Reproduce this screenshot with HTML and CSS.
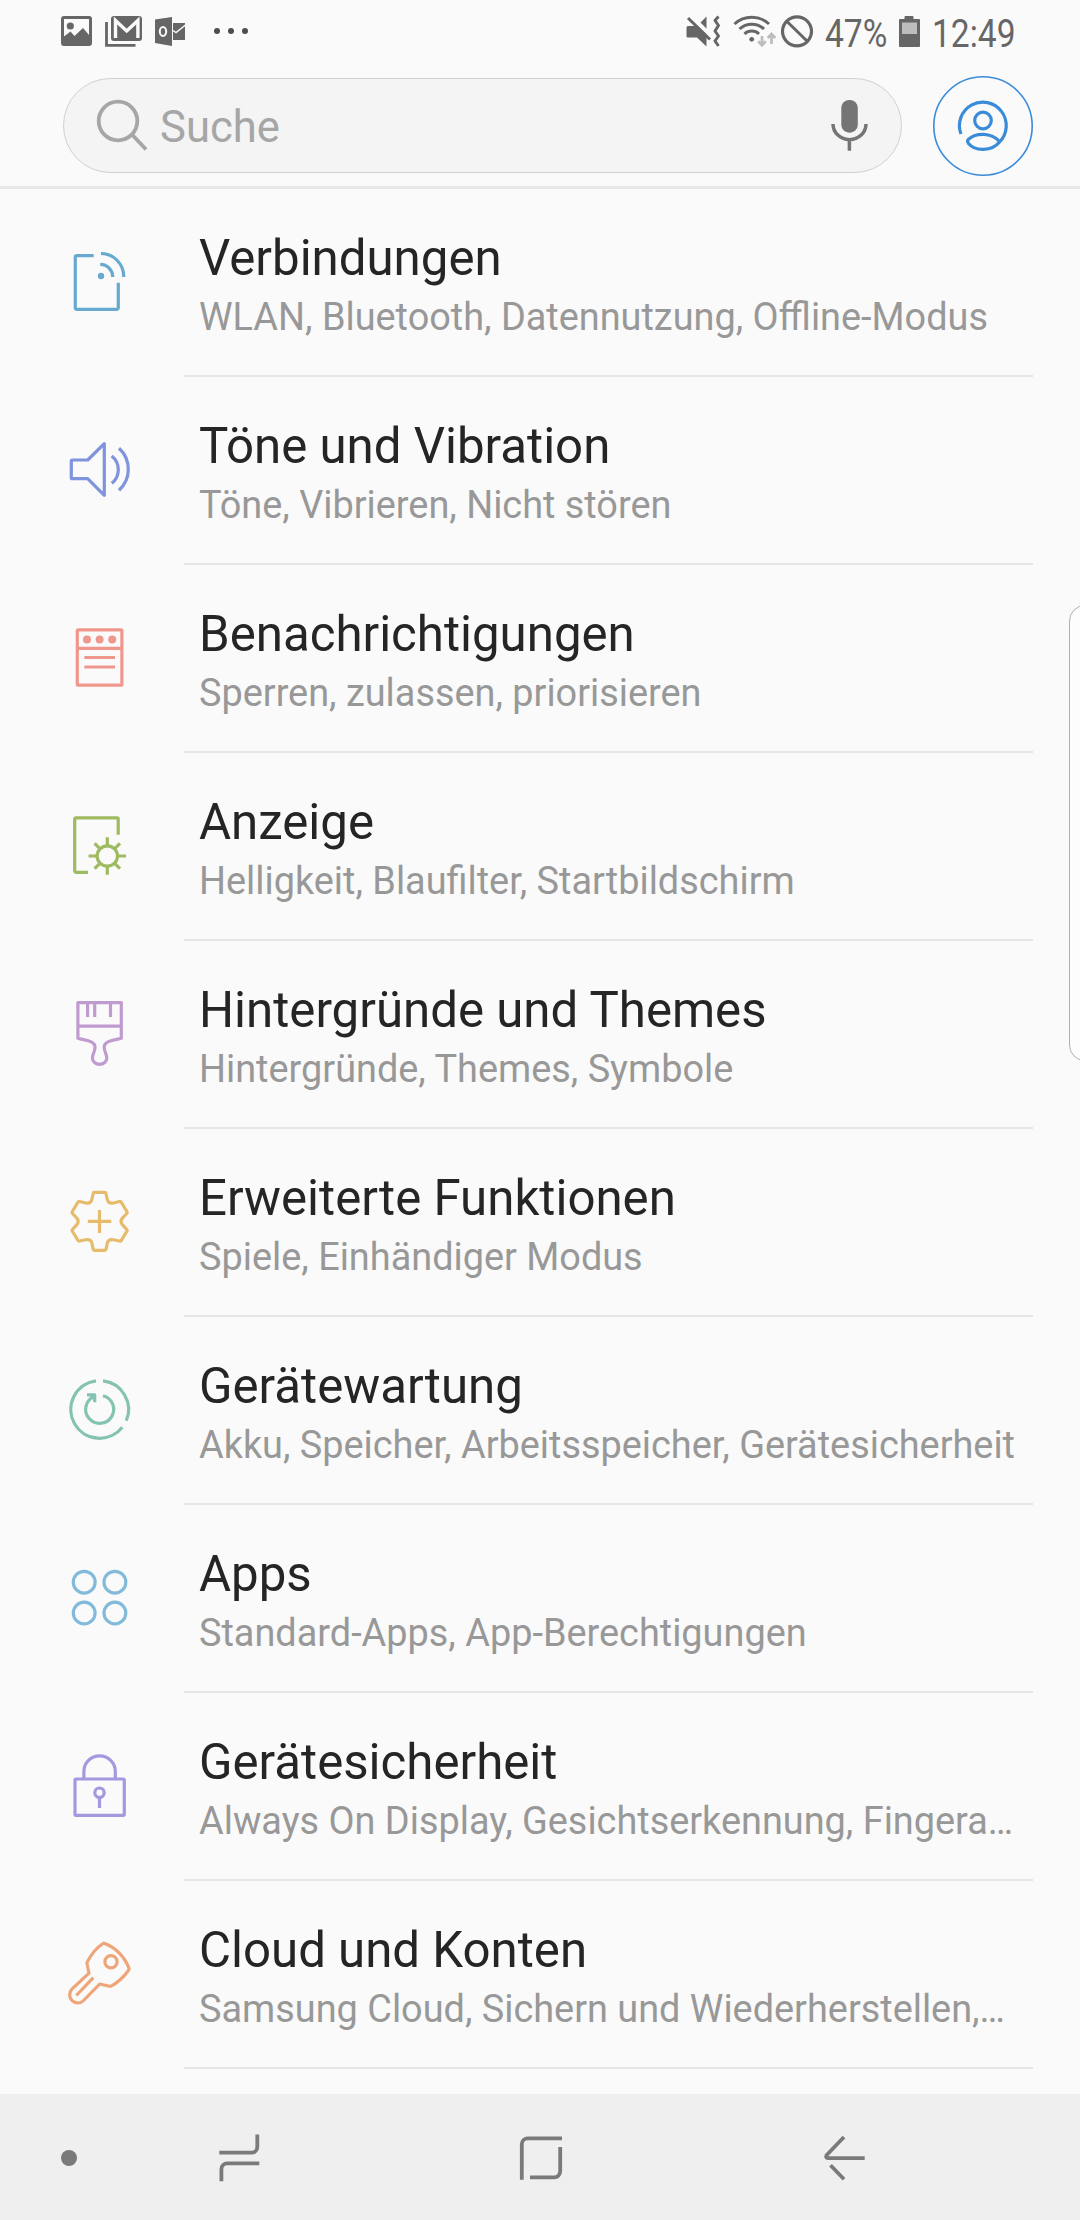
FILE: index.html
```html
<!DOCTYPE html>
<html lang="de">
<head>
<meta charset="utf-8">
<title>Einstellungen</title>
<link rel="stylesheet" href="styles.css">
</head>
<body>
<div class="screen">
  <div class="status">
    <svg class="status-left" viewBox="60 12 190 40" width="190" height="40">
      <path fill="#666" fill-rule="evenodd" d="M64 16H89a3 3 0 0 1 3 3V43a3 3 0 0 1-3 3H64a3 3 0 0 1-3-3V19a3 3 0 0 1 3-3ZM64 19V36.500l6.500-5 4 4.500 8.500-8 6 7V19Z"/>
      <circle cx="70.300" cy="26" r="3.600" fill="#666"/>
      <path d="M106.500 22V45.300H135.500" fill="none" stroke="#666" stroke-width="2.800"/>
      <rect x="111" y="16" width="31" height="25" rx="3" fill="#666"/>
      <path d="M115.500 38V20.500l11.200 10.500 11.200-10.500V38" fill="none" stroke="#fafafa" stroke-width="3.400"/>
      <path d="M155 19.500 172 17V46L155 43Z" fill="#666"/>
      <ellipse cx="163" cy="31.500" rx="3.200" ry="4.400" fill="none" stroke="#fafafa" stroke-width="2"/>
      <path d="M173 23H185V40H173Z" fill="#666"/>
      <path d="m173 30.500 3 2L185.500 25" fill="none" stroke="#fafafa" stroke-width="1.500"/>
      <circle cx="217" cy="31" r="3" fill="#4d4d4d"/><circle cx="231" cy="31" r="3" fill="#4d4d4d"/><circle cx="245" cy="31" r="3" fill="#4d4d4d"/>
    </svg>
    <div class="status-right">
      <svg viewBox="684 12 132 40" width="132" height="40">
        <path fill="#666" d="M688 26h9l9.500-9.500V46.500L697 37.500h-9a1.500 1.500 0 0 1-1.500-1.500V27.500a1.500 1.500 0 0 1 1.500-1.500Z"/>
        <path d="m689 14 22.500 22.500" stroke="#fafafa" stroke-width="4"/>
        <path d="m688 18 22 21.500" stroke="#666" stroke-width="3"/>
        <path d="m718.500 16.500-3.500 4 3.500 5-3.500 5.500 3.500 5-3.500 5 3.500 5" fill="none" stroke="#666" stroke-width="3" stroke-linejoin="round"/>
        <path d="M734.500 24a25.500 25.500 0 0 1 34.500 0M739.500 29a18 18 0 0 1 24.500 0M744.500 34a10.500 10.500 0 0 1 14.500 0" fill="none" stroke="#666" stroke-width="3"/>
        <circle cx="751.700" cy="39.300" r="2.400" fill="#666"/>
        <path d="M762 36V45M758.200 41.300l3.800 4 3.800-4M771.500 44V34.500M767.700 38l3.800-4 3.800 4" fill="none" stroke="#bdbdbd" stroke-width="2.700"/>
        <circle cx="797" cy="31.300" r="14.500" fill="none" stroke="#666" stroke-width="3.200"/>
        <path d="m786.500 21 21 20.500" stroke="#666" stroke-width="3"/>
      </svg>
      <span class="percent"><span class="condensed">47%</span></span>
      <svg class="battery" viewBox="899 12 22 40" width="22" height="40">
        <path fill="#666" d="M905.500 16h7a1 1 0 0 1 1 1v2H919a1 1 0 0 1 1 1V46a1 1 0 0 1-1 1H900a1 1 0 0 1-1-1V20a1 1 0 0 1 1-1h4.500V17a1 1 0 0 1 1-1Z"/>
        <path fill="#bdbdbd" d="M902 22.500H917V34H902Z"/>
      </svg>
      <span class="clock"><span class="condensed">12:49</span></span>
    </div>
  </div>

  <header class="header">
    <div class="search">
      <svg viewBox="92 98 60 60" width="60" height="60" fill="none" stroke="#a6a6a6" stroke-width="3.800"><circle cx="118" cy="123" r="19.300"/><path d="m132 136.500 14 15"/></svg>
      <span class="placeholder">Suche</span>
      <svg viewBox="830 98 40 56" width="40" height="56" fill="none" stroke="#757575" stroke-width="3.500"><rect x="841.300" y="100" width="16.500" height="32.700" rx="8" fill="#757575" stroke="none"/><path d="M833 124a16.400 15.600 0 0 0 33 0M849.400 139V150.700"/></svg>
    </div>
    <div class="profile">
      <svg viewBox="933 76 100 100" width="100" height="100" fill="none" stroke="#3a8bd8" stroke-width="3.200"><circle cx="983" cy="126" r="49.200" stroke-width="1.600"/><path d="M961 134A23.400 23.400 0 1 1 999.500 142C992 151.500 975 151.500 968.500 143.500Q966.700 141 968.500 139.200C976.500 132.500 991 132.500 999.500 141.500"/><circle cx="983" cy="120.500" r="8.300"/></svg>
    </div>
  </header>

  <main class="list">
    <div class="row">
      <svg class="icon blue" viewBox="0 0 64 64"><path d="M26.700 5.700H9.800a1.500 1.500 0 0 0-1.500 1.500V57.800a1.500 1.500 0 0 0 1.500 1.500H49.800a1.500 1.500 0 0 0 1.500-1.500V32.700M33.300 14.300A12.500 12.500 0 0 1 45.700 27M34 3.500A22.900 22.900 0 0 1 56.700 27"/><circle class="solid" cx="34" cy="26" r="3.200"/></svg>
      <div class="text"><div class="title">Verbindungen</div><div class="sub">WLAN, Bluetooth, Datennutzung, Offline-Modus</div></div>
    </div>
    <div class="row">
      <svg class="icon indigo" viewBox="0 0 64 64"><path d="M5.300 22H20.700L37.300 5.700V57.300L20.700 40.700H5.300a1 1 0 0 1-1-1V23a1 1 0 0 1 1-1ZM44.700 18a17.400 17.400 0 0 1 0 27.300M52 10.300a28.400 28.400 0 0 1 0 42"/></svg>
      <div class="text"><div class="title">Töne und Vibration</div><div class="sub">Töne, Vibrieren, Nicht stören</div></div>
    </div>
    <div class="row">
      <svg class="icon coral" viewBox="0 0 64 64"><rect x="10.300" y="3.900" width="44.600" height="55.300" rx="1"/><path d="M10.300 22.300H55M17.300 31.500H48M17.300 41H48"/><g class="solid"><circle cx="20" cy="13.400" r="4"/><circle cx="32.600" cy="13.400" r="4"/><circle cx="45.200" cy="13.400" r="4"/></g></svg>
      <div class="text"><div class="title">Benachrichtigungen</div><div class="sub">Sperren, zulassen, priorisieren</div></div>
    </div>
    <div class="row">
      <svg class="icon green" viewBox="0 0 64 64"><path d="M21 58.300H8.900a1.200 1.200 0 0 1-1.200-1.200V5a1.200 1.200 0 0 1 1.200-1.200H50a1.200 1.200 0 0 1 1.200 1.200V20.700"/><circle cx="40.300" cy="42" r="10.200"/><path d="M40.300 31.500V23.300M40.300 52.500V60.700M29.800 42H21.600M50.800 42H59M32.900 34.600 27.600 29.300M47.700 34.600 53 29.300M32.900 49.400 27.600 54.700M47.700 49.400 53 54.700"/></svg>
      <div class="text"><div class="title">Anzeige</div><div class="sub">Helligkeit, Blaufilter, Startbildschirm</div></div>
    </div>
    <div class="row">
      <svg class="icon violet" viewBox="0 0 64 64"><path d="M10.900.7H54.300V36.300C47 38.500 37.800 38.500 37.200 44.500C36.800 49 39.800 52 39.800 56A7.200 6.300 0 0 1 25.400 56C25.400 52 28.400 49 28 44.500C27.400 38.500 18.200 38.500 10.900 36.300ZM10.900 24.200H54.300M20.600.7V14.900M27.700.7V14.900M43.500.7V14.900"/></svg>
      <div class="text"><div class="title">Hintergründe und Themes</div><div class="sub">Hintergründe, Themes, Symbole</div></div>
    </div>
    <div class="row">
      <svg class="icon amber" viewBox="0 0 64 64"><path d="M27.500 2.400H37.700Q38.800 2.400 39 3.500L40.300 9.500Q41.300 14 46.500 13L52.500 11.500Q53.700 11.200 54.300 12.200L60 21.700Q60.600 22.700 59.700 23.500L56 27.300Q52 31.300 56 35.300L59.700 39.300Q60.600 40.200 60 41L54.300 50.300Q53.700 51.300 52.500 51L46.500 49.800Q41.300 48.800 40.300 53.200L39 59.300Q38.800 60.400 37.700 60.400H27.500Q26.400 60.400 26.200 59.300L24.900 53.200Q23.900 48.800 18.700 49.800L12.700 51Q11.500 51.300 10.900 50.300L5.200 41Q4.600 40.200 5.500 39.300L9.200 35.300Q13.200 31.300 9.200 27.300L5.500 23.500Q4.600 22.700 5.200 21.700L10.900 12.200Q11.500 11.200 12.700 11.500L18.700 13Q23.900 14 24.900 9.500L26.200 3.500Q26.400 2.400 27.500 2.400ZM20.800 31.400H44.300M32.500 20V43"/></svg>
      <div class="text"><div class="title">Erweiterte Funktionen</div><div class="sub">Spiele, Einhändiger Modus</div></div>
    </div>
    <div class="row">
      <svg class="icon teal" viewBox="0 0 64 64"><path d="M36 2.900A28.800 28.800 0 0 1 59.300 42.700M55.300 49.200A28.800 28.800 0 1 1 29 2.900M36 17.700A14 14 0 1 1 27 18.500M20 16.900H27.700V24.200"/></svg>
      <div class="text"><div class="title">Gerätewartung</div><div class="sub">Akku, Speicher, Arbeitsspeicher, Gerätesicherheit</div></div>
    </div>
    <div class="row">
      <svg class="icon sky" viewBox="0 0 64 64"><circle cx="17.200" cy="16.200" r="10.900"/><circle cx="47.900" cy="16.200" r="10.900"/><circle cx="17.200" cy="47" r="10.900"/><circle cx="47.900" cy="47" r="10.900"/></svg>
      <div class="text"><div class="title">Apps</div><div class="sub">Standard-Apps, App-Berechtigungen</div></div>
    </div>
    <div class="row">
      <svg class="icon purple" viewBox="0 0 64 64"><rect x="8" y="25" width="49.300" height="36.300" rx="1"/><path d="M16.900 25V17.500A15.700 15.700 0 0 1 48.300 17.500V25M32.500 44V54"/><circle cx="32.500" cy="38.700" r="4.700"/></svg>
      <div class="text"><div class="title">Gerätesicherheit</div><div class="sub">Always On Display, Gesichtserkennung, Fingera…</div></div>
    </div>
    <div class="row">
      <svg class="icon orange" viewBox="0 0 64 64"><path d="M36 1.500Q36.700 1 37.700 1.400C49 5.500 58 15.500 62 26.300Q62.400 27.400 61.600 28.200C57 34.500 51 40.500 44 44.100Q43.400 44.400 42.700 44.200L32.700 42 16.600 58.500A8.100 8.100 0 0 1 4.900 47.200L22 31.200 20 21.500Q19.800 20.700 20.300 19.900C24 12.500 30 5.500 36 1.500ZM9.300 53.500 26.300 35.700"/><circle cx="44" cy="19.700" r="6.100"/></svg>
      <div class="text"><div class="title">Cloud und Konten</div><div class="sub">Samsung Cloud, Sichern und Wiederherstellen,…</div></div>
    </div>
  </main>

  <nav class="nav">
    <svg viewBox="0 2094 1080 126" width="1080" height="126" fill="none" stroke="#7a7a7a" stroke-width="3.800">
      <circle cx="69" cy="2158" r="8" fill="#7a7a7a" stroke="none"/>
      <path d="M257.300 2134.500V2147a5.700 5.700 0 0 1-5.700 5.700H219.300M221.400 2181.200V2169a5.700 5.700 0 0 1 5.700-5.700H259.300"/>
      <path d="M521.800 2179.800V2144.300a6 6 0 0 1 6-6H562M560.200 2147V2171.300a6 6 0 0 1-6 6H530"/>
      <path d="M844 2137 826.500 2155.200Q825.300 2158.100 828.500 2158.100H864.700M830.500 2165.300 844 2179.300"/>
    </svg>
  </nav>
  <div class="edge-handle"></div>
</div>
</body>
</html>
```
FILE: styles.css
```css
* { box-sizing: border-box; }
body { margin: 0; background: #fafafa; font-family: Roboto, "Liberation Sans", sans-serif; }
svg { display: block; flex: none; overflow: visible; }
.screen { position: relative; width: 1080px; height: 2220px; overflow: hidden; display: flex; flex-direction: column; background: #fafafa; }

.status { height: 76px; padding: 12px 64px 0 60px; display: flex; justify-content: space-between; align-items: flex-start; }
.status-right { display: flex; color: #666; font-size: 39px; line-height: 44px; }
.percent { width: 63px; margin-left: 9px; }
.battery { margin-left: 11px; }
.clock { width: 84px; margin-left: 11px; }
.condensed { display: inline-block; transform: scaleX(.86); transform-origin: 0 0; }

.header { height: 113px; padding: 0 47px 10px 63px; display: flex; justify-content: space-between; align-items: flex-start; border-bottom: 3px solid #e8e8e8; }
.search { width: 839px; height: 95px; margin-top: 2px; padding: 0 31px 0 28px; display: flex; align-items: center; border: 1px solid #d0d0d0; border-radius: 48px; background: #f4f4f4; }
.placeholder { flex: 1; margin-left: 8px; padding-top: 5px; font-size: 43.6px; line-height: 52px; color: #a6a6a6; }

.list { height: 1905px; flex: none; overflow: hidden; }
.row { height: 188px; padding: 40px 47px 0 67px; display: flex; align-items: flex-start; background: linear-gradient(#e5e5e5, #e5e5e5) 184px 186px / 849px 2px no-repeat; }
.icon { width: 64px; height: 64px; margin-top: 21px; fill: none; stroke: currentColor; stroke-width: 3.2px; stroke-linejoin: round; }
.solid { fill: currentColor; stroke: none; }
.text { margin-left: 68px; white-space: nowrap; }
.title { font-size: 49.2px; line-height: 58px; color: #252525; }
.sub { margin-top: 8px; font-size: 37.87px; line-height: 44px; color: #989898; }
.blue { color: #68a9d0; }
.indigo { color: #7f94dc; }
.coral { color: #f0978d; }
.green { color: #9fbb62; }
.violet { color: #c09bcf; }
.amber { color: #e6bb6b; }
.teal { color: #84c3b1; }
.sky { color: #82badb; }
.purple { color: #a598de; }
.orange { color: #eea679; }

.nav { height: 126px; flex: none; background: #efefef; }
.edge-handle { position: absolute; left: 1069px; top: 605px; width: 40px; height: 456px; border: 1.5px solid #b0b0b0; border-radius: 16px; background: #fdfdfd; }
```
